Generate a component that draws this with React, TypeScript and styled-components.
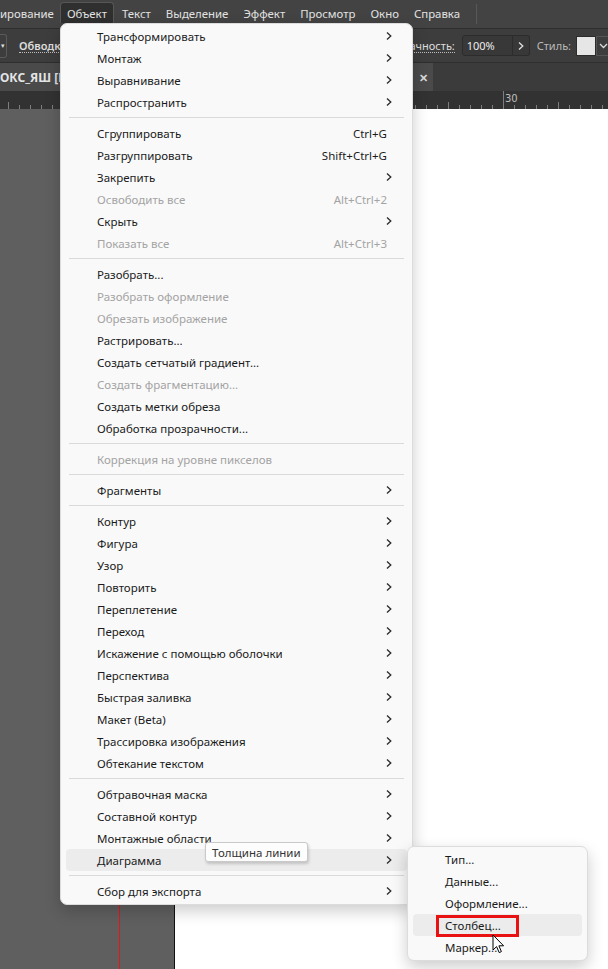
import React from "react";
import styled, { createGlobalStyle } from "styled-components";

const GlobalStyle = createGlobalStyle`
  html, body {
    margin: 0;
    padding: 0;
    width: 608px;
    height: 969px;
    overflow: hidden;
    background: #5f5f5f;
  }
  * {
    box-sizing: border-box;
  }
`;

const uiFont = `"Noto Sans", "Open Sans", sans-serif`;

const Page = styled.div`
  position: relative;
  width: 608px;
  height: 969px;
  display: flex;
  flex-direction: column;
  overflow: hidden;
  font-family: ${uiFont};
`;

/* ---------- app menu bar ---------- */

const MenuBar = styled.div`
  height: 29px;
  background: #434343;
  border-bottom: 1px solid #2e2e2e;
  display: flex;
  align-items: center;
  gap: 1px;
  flex-shrink: 0;
`;

const MenuBarItem = styled.div<{ $open?: boolean; $cut?: boolean }>`
  height: 21px;
  margin-top: 2px;
  align-self: flex-start;
  display: flex;
  align-items: center;
  padding: ${(p) => (p.$cut ? "0" : "0 6px")};
  font-size: 11.4px;
  color: #e2e2e2;
  white-space: nowrap;
  background: ${(p) => (p.$open ? "#2f2f2f" : "transparent")};
  border: 1px solid ${(p) => (p.$open ? "#575757" : "transparent")};
  border-left-width: ${(p) => (p.$cut ? "0" : "1px")};
  border-bottom: none;
  border-radius: 4px 4px 0 0;
  margin-right: ${(p) => (p.$cut ? "4px" : "0")};
`;

const MenuBarDivider = styled.div`
  width: 1px;
  height: 20px;
  background: #585858;
  margin-left: 8px;
`;

/* ---------- control bar ---------- */

const ControlBar = styled.div`
  height: 34px;
  background: #3d3d3d;
  border-bottom: 1px solid #2e2e2e;
  display: flex;
  align-items: center;
  flex-shrink: 0;
`;

const StubDropdown = styled.div`
  width: 7px;
  height: 24px;
  border: 1px solid #5a5a5a;
  border-left: none;
  border-radius: 0 3px 3px 0;
  display: flex;
  align-items: center;
  justify-content: flex-end;
  padding-right: 1px;
  color: #ddd;
  font-size: 7px;
`;

const DottedLabel = styled.span<{ $bold?: boolean }>`
  font-size: 11px;
  color: #dedede;
  font-weight: ${(p) => (p.$bold ? 600 : 400)};
  border-bottom: 1px dotted #bdbdbd;
  line-height: 13px;
  white-space: nowrap;
`;

const LeftGroup = styled.div`
  display: flex;
  align-items: center;
  gap: 12px;
`;

const RightGroup = styled.div`
  margin-left: auto;
  display: flex;
  align-items: center;
`;

const ValueInput = styled.div`
  width: 51px;
  height: 21px;
  margin-left: 7px;
  background: #383838;
  border: 1px solid #2c2c2c;
  border-radius: 3px 0 0 3px;
  color: #ececec;
  font-size: 11px;
  display: flex;
  align-items: center;
  padding-left: 4px;
`;

const StepButton = styled.div`
  width: 17px;
  height: 21px;
  background: #383838;
  border: 1px solid #2c2c2c;
  border-left: none;
  border-radius: 0 3px 3px 0;
  display: flex;
  align-items: center;
  justify-content: center;
`;

const PlainLabel = styled.span`
  font-size: 11px;
  color: #b9b9b9;
  margin: 0 5px 0 7px;
`;

const Swatch = styled.div`
  width: 20px;
  height: 20px;
  background: #e6e6e6;
  border: 1px solid #2c2c2c;
`;

const SwatchArrow = styled.div`
  width: 12px;
  height: 20px;
  border: 1px solid #555;
  border-right: none;
  display: flex;
  align-items: center;
  justify-content: flex-end;
`;

/* ---------- document tabs ---------- */

const TabBar = styled.div`
  height: 28px;
  background: #3b3b3b;
  display: flex;
  flex-shrink: 0;
`;

const DocTab = styled.div`
  width: 433px;
  background: #4a4a4a;
  display: flex;
  align-items: center;
  justify-content: space-between;
  padding: 0 5px 0 0;
`;

const TabTitle = styled.span`
  font-size: 12px;
  font-weight: 700;
  color: #e4e4e4;
  white-space: nowrap;
`;

const TabClose = styled.span`
  font-size: 11px;
  font-weight: 700;
  color: #d8d8d8;
`;

/* ---------- ruler ---------- */

const Ruler = styled.div`
  height: 18px;
  background: #323232;
  position: relative;
  flex-shrink: 0;
`;

const RulerLabel = styled.span`
  position: absolute;
  left: 505px;
  top: 2px;
  font-size: 10px;
  color: #bdbdbd;
  font-family: "DejaVu Sans", sans-serif;
  line-height: 12px;
`;

/* ---------- workspace ---------- */

const Workspace = styled.div`
  flex: 1;
  display: flex;
`;

const Pasteboard = styled.div`
  width: 175px;
  background: #5f5f5f;
  border-right: 1px solid #111;
  display: flex;
`;

const GuideGap = styled.div`
  width: 119px;
`;

const Guide = styled.div`
  width: 1px;
  background: #e01818;
`;

const Artboard = styled.div`
  flex: 1;
  background: #ffffff;
`;

/* ---------- dropdown menus ---------- */

const Dropdown = styled.div<{ $left: number; $top: number; $width: number }>`
  position: absolute;
  left: ${(p) => p.$left}px;
  top: ${(p) => p.$top}px;
  width: ${(p) => p.$width}px;
  background: #f9f9f9;
  border: 1px solid #dcdcdc;
  border-radius: 7px;
  box-shadow: 0 6px 16px rgba(0, 0, 0, 0.2);
  padding: 1px 0 2px;
  font-family: ${uiFont};
`;

const Item = styled.div<{ $disabled?: boolean; $active?: boolean; $indent: number }>`
  height: 22px;
  margin: 0 5px;
  padding: 0 15px 0 ${(p) => p.$indent}px;
  display: flex;
  align-items: center;
  font-size: 11.5px;
  color: ${(p) => (p.$disabled ? "#a3a3a3" : "#1b1b1b")};
  background: ${(p) => (p.$active ? "#ececec" : "transparent")};
  border-radius: 4px;
  white-space: nowrap;
`;

const ItemLabel = styled.span`
  flex: 1;
`;

const Shortcut = styled.span<{ $disabled?: boolean }>`
  color: ${(p) => (p.$disabled ? "#a3a3a3" : "#1b1b1b")};
  margin-right: 5px;
`;

const Separator = styled.div`
  height: 1px;
  background: #dadada;
  margin: 4px 8px;
`;

const Tooltip = styled.div`
  position: absolute;
  left: 205px;
  top: 842px;
  height: 20px;
  padding: 0 6px;
  background: #fdfdfd;
  border: 1px solid #c9c9c9;
  border-radius: 3px;
  box-shadow: 1px 2px 3px rgba(0, 0, 0, 0.18);
  font-family: ${uiFont};
  font-size: 11.5px;
  color: #333;
  display: flex;
  align-items: center;
`;

const Highlight = styled.div`
  position: absolute;
  left: 436px;
  top: 915px;
  width: 83px;
  height: 22px;
  border: 3px solid #e81212;
`;

const Cursor = styled.svg`
  position: absolute;
  left: 492px;
  top: 934px;
`;

const Chevron: React.FC<{ color?: string }> = ({ color = "#2a2a2a" }) => (
  <svg width="6" height="10" viewBox="0 0 6 10">
    <path d="M1 1.5 L4.8 5 L1 8.5" fill="none" stroke={color} strokeWidth="1.3" />
  </svg>
);

const ChevronDown: React.FC = () => (
  <svg width="9" height="6" viewBox="0 0 9 6">
    <path d="M1 1 L4.5 4.5 L8 1" fill="none" stroke="#dcdcdc" strokeWidth="1.3" />
  </svg>
);

type Entry =
  | { sep: true }
  | { label: string; shortcut?: string; sub?: boolean; disabled?: boolean; active?: boolean; sep?: false };

const S: Entry = { sep: true };

const objectMenu: Entry[] = [
  { label: "Трансформировать", sub: true },
  { label: "Монтаж", sub: true },
  { label: "Выравнивание", sub: true },
  { label: "Распространить", sub: true },
  S,
  { label: "Сгруппировать", shortcut: "Ctrl+G" },
  { label: "Разгруппировать", shortcut: "Shift+Ctrl+G" },
  { label: "Закрепить", sub: true },
  { label: "Освободить все", shortcut: "Alt+Ctrl+2", disabled: true },
  { label: "Скрыть", sub: true },
  { label: "Показать все", shortcut: "Alt+Ctrl+3", disabled: true },
  S,
  { label: "Разобрать..." },
  { label: "Разобрать оформление", disabled: true },
  { label: "Обрезать изображение", disabled: true },
  { label: "Растрировать..." },
  { label: "Создать сетчатый градиент..." },
  { label: "Создать фрагментацию...", disabled: true },
  { label: "Создать метки обреза" },
  { label: "Обработка прозрачности..." },
  S,
  { label: "Коррекция на уровне пикселов", disabled: true },
  S,
  { label: "Фрагменты", sub: true },
  S,
  { label: "Контур", sub: true },
  { label: "Фигура", sub: true },
  { label: "Узор", sub: true },
  { label: "Повторить", sub: true },
  { label: "Переплетение", sub: true },
  { label: "Переход", sub: true },
  { label: "Искажение с помощью оболочки", sub: true },
  { label: "Перспектива", sub: true },
  { label: "Быстрая заливка", sub: true },
  { label: "Макет (Beta)", sub: true },
  { label: "Трассировка изображения", sub: true },
  { label: "Обтекание текстом", sub: true },
  S,
  { label: "Обтравочная маска", sub: true },
  { label: "Составной контур", sub: true },
  { label: "Монтажные области", sub: true },
  { label: "Диаграмма", sub: true, active: true },
  S,
  { label: "Сбор для экспорта", sub: true },
];

const chartMenu: Entry[] = [
  { label: "Тип..." },
  { label: "Данные..." },
  { label: "Оформление..." },
  { label: "Столбец...", active: true },
  { label: "Маркер..." },
];

const MenuList: React.FC<{ entries: Entry[]; indent: number }> = ({ entries, indent }) => (
  <>
    {entries.map((e, i) =>
      e.sep ? (
        <Separator key={i} />
      ) : (
        <Item key={i} $indent={indent} $disabled={e.disabled} $active={e.active}>
          <ItemLabel>{e.label}</ItemLabel>
          {e.shortcut && <Shortcut $disabled={e.disabled}>{e.shortcut}</Shortcut>}
          {e.sub && <Chevron />}
        </Item>
      ),
    )}
  </>
);

const RulerTicks: React.FC = () => {
  const ticks: React.ReactNode[] = [];
  for (let x = 503 % 11; x < 608; x += 11) {
    const off = (x - 503) % 110;
    const major = off === 0;
    const mid = !major && Math.abs(off) === 55;
    const h = major ? 18 : mid ? 7 : 4;
    ticks.push(
      <line key={x} x1={x + 0.5} x2={x + 0.5} y1={18 - h} y2={18} stroke="#7d7d7d" strokeWidth="1" />,
    );
  }
  return (
    <svg width="608" height="18" style={{ display: "block" }}>
      {ticks}
    </svg>
  );
};

export default function App() {
  const barItems = ["Текст", "Выделение", "Эффект", "Просмотр", "Окно", "Справка"];
  return (
    <Page>
      <GlobalStyle />
      <MenuBar>
        <MenuBarItem $cut>ирование</MenuBarItem>
        <MenuBarItem $open>Объект</MenuBarItem>
        {barItems.map((t) => (
          <MenuBarItem key={t}>{t}</MenuBarItem>
        ))}
        <MenuBarDivider />
      </MenuBar>

      <ControlBar>
        <LeftGroup>
          <StubDropdown>▾</StubDropdown>
          <DottedLabel $bold>Обводка</DottedLabel>
        </LeftGroup>
        <RightGroup>
          <DottedLabel>Непрозрачность:</DottedLabel>
          <ValueInput>100%</ValueInput>
          <StepButton>
            <Chevron color="#e0e0e0" />
          </StepButton>
          <PlainLabel>Стиль:</PlainLabel>
          <Swatch />
          <SwatchArrow>
            <ChevronDown />
          </SwatchArrow>
        </RightGroup>
      </ControlBar>

      <TabBar>
        <DocTab>
          <TabTitle>ОКС_ЯШ [B</TabTitle>
          <TabClose>✕</TabClose>
        </DocTab>
      </TabBar>

      <Ruler>
        <RulerTicks />
        <RulerLabel>30</RulerLabel>
      </Ruler>

      <Workspace>
        <Pasteboard>
          <GuideGap />
          <Guide />
        </Pasteboard>
        <Artboard />
      </Workspace>

      <Dropdown $left={60} $top={23} $width={353}>
        <MenuList entries={objectMenu} indent={31} />
      </Dropdown>

      <Tooltip>Толщина линии</Tooltip>

      <Dropdown $left={407} $top={846} $width={181}>
        <MenuList entries={chartMenu} indent={32} />
      </Dropdown>

      <Highlight />

      <Cursor width="14" height="21" viewBox="0 0 14 21">
        <path
          d="M1 1 L1 16 L4.6 12.6 L7.2 18.6 L9.4 17.6 L6.9 11.8 L11.6 11.8 Z"
          fill="#ffffff"
          stroke="#000000"
          strokeWidth="1"
          strokeLinejoin="round"
        />
      </Cursor>
    </Page>
  );
}
